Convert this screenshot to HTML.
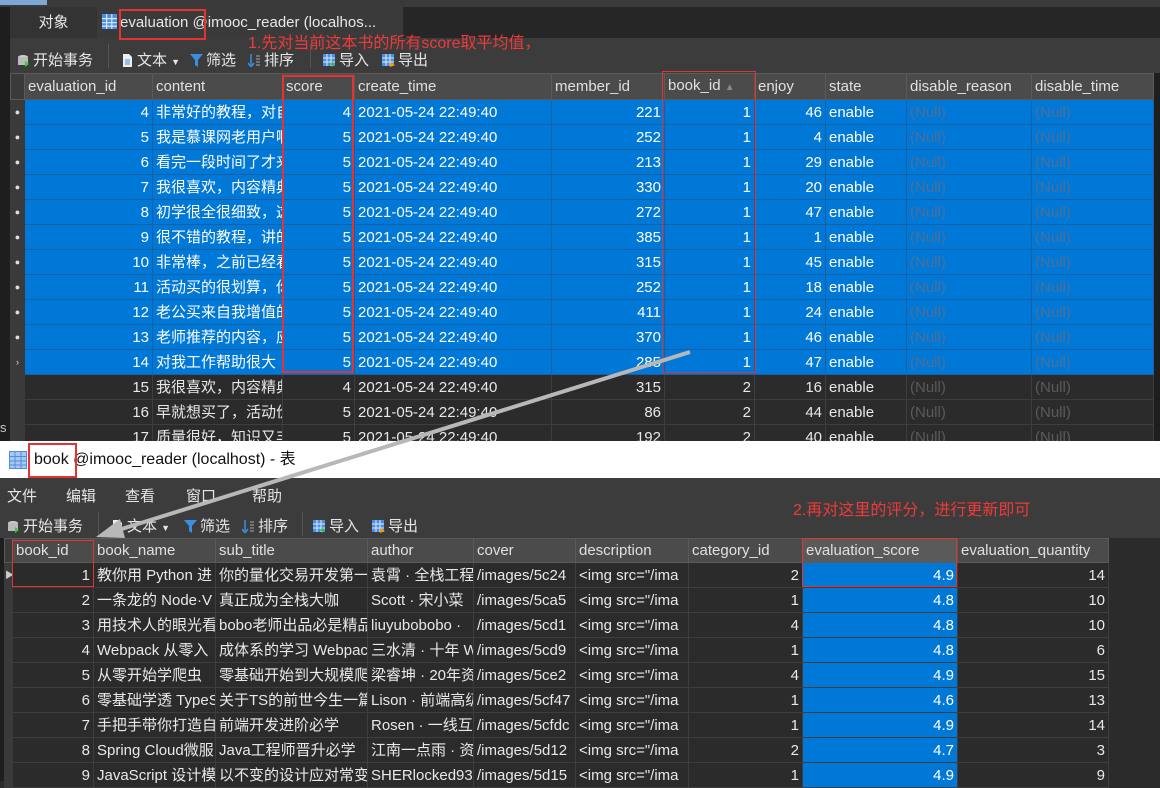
<!DOCTYPE html>
<html><head><meta charset="utf-8"><style>
*{margin:0;padding:0;box-sizing:border-box}
body{width:1160px;height:781px;overflow:hidden;background:#2b2b2b;position:relative;font-family:"Liberation Sans","Noto Sans CJK SC",sans-serif;font-size:15px;color:#e8e8e8}
.abs{position:absolute}
table{border-collapse:collapse;table-layout:fixed;position:absolute}
td,th{height:25px;border:1px solid #3e3e3e;white-space:nowrap;overflow:hidden;padding:0 3px;font-weight:normal;text-align:left;line-height:23px}
th{background:#4b4b4b;color:#e0e0e0;border-color:#5a5a5a;height:24px}
td.r{text-align:right}
tr.s td{background:#0078d7;border-color:#1a5fa0;color:#fff}
td.n{color:#5a5a5a}
tr.s td.n{color:#4f6f95}
td.m{background:#3a3a3a;border-color:#3a3a3a;color:#ccc;font-size:9px;padding:0;text-align:center}
tr.s td.m{background:#3a3a3a;border-color:#3a3a3a;color:#ddd}
.red{position:absolute;border:2px solid #e53333}
.tb{position:absolute;font-size:15px;color:#e6e6e6}
.ico{display:inline-block;width:13px;height:13px;vertical-align:-2px;margin-right:3px}
</style></head><body>
<div class="abs" style="left:0;top:0;width:1160px;height:7px;background:#3a3a3a"></div>
<div class="abs" style="left:0;top:0;width:47px;height:5px;background:#7fa7d6"></div>
<div class="abs" style="left:0;top:7px;width:1160px;height:31px;background:#262626"></div>
<div class="abs" style="left:0;top:7px;width:10px;height:434px;background:#1e1e1e"></div>
<div class="abs" style="left:10px;top:7px;width:87px;height:31px;background:#333;text-align:center;line-height:31px">对象</div>
<div class="abs" style="left:97px;top:7px;width:306px;height:31px;background:#3a3a3a;line-height:31px;padding-left:5px;white-space:nowrap"><svg class="ico" viewBox="0 0 13 13" style="width:15px;height:15px"><rect x="0" y="0" width="13" height="13" fill="#4a8fe0"/><path d="M0 4H13M0 7.5H13M0 10.5H13M4 0V13M8.5 0V13" stroke="#dbe8f8" stroke-width="1"/></svg>evaluation @imooc_reader (localhos...</div>
<div class="abs" style="left:10px;top:38px;width:1150px;height:35px;background:#3c3c3c"></div>
<div class="tb" style="left:17px;top:49px"><svg class="ico" viewBox="0 0 13 13"><ellipse cx="6" cy="3" rx="5" ry="2" fill="#ccc"/><rect x="1" y="3" width="10" height="8" fill="#bbb"/><path d="M8 7l4 3-4 3z" fill="#3c3"/></svg>开始事务</div>
<div class="abs" style="left:108px;top:44px;width:1px;height:24px;background:#555"></div>
<div class="tb" style="left:121px;top:49px"><svg class="ico" viewBox="0 0 13 13"><path d="M2 0h6l3 3v10H2z" fill="#eee"/><path d="M4 6h5M4 8h5M4 10h5" stroke="#4a8fe0"/></svg>文本 <span style="font-size:9px">▼</span></div>
<div class="tb" style="left:190px;top:49px"><svg class="ico" viewBox="0 0 13 13"><path d="M0 0h13L8 6v7L5 11V6z" fill="#3a8fe0"/></svg>筛选</div>
<div class="tb" style="left:248px;top:49px"><svg class="ico" viewBox="0 0 13 13"><path d="M3 0v11M0 9l3 4 3-4" stroke="#3a8fe0" fill="none" stroke-width="1.5"/><path d="M8 2h4M8 5h4M8 8h4M8 11h4" stroke="#aaa"/></svg>排序</div>
<div class="abs" style="left:310px;top:44px;width:1px;height:24px;background:#555"></div>
<div class="tb" style="left:323px;top:49px"><svg class="ico" viewBox="0 0 13 13"><rect width="12" height="12" fill="#4a8fe0"/><path d="M0 4h12M0 8h12M4 0v12M8 0v12" stroke="#dbe8f8"/><path d="M7 10l3-3v6z" fill="#3c3"/></svg>导入</div>
<div class="tb" style="left:382px;top:49px"><svg class="ico" viewBox="0 0 13 13"><rect width="12" height="12" fill="#4a8fe0"/><path d="M0 4h12M0 8h12M4 0v12M8 0v12" stroke="#dbe8f8"/><path d="M8 8l5 3-5 2z" fill="#f90"/></svg>导出</div>
<div class="abs" style="left:248px;top:29px;color:#ee3a3a;font-size:16px;white-space:nowrap">1.先对当前这本书的所有score取平均值，</div>
<div class="abs" style="left:10px;top:73px;width:1143px;height:368px;background:#2b2b2b"></div>
<div class="abs" style="left:1153px;top:73px;width:7px;height:368px;background:#1e1e1e"></div>
<table style="left:10px;top:73px;width:1143px">
<colgroup><col style="width:14px"><col style="width:128px"><col style="width:130px"><col style="width:72px"><col style="width:197px"><col style="width:113px"><col style="width:90px"><col style="width:71px"><col style="width:81px"><col style="width:125px"><col style="width:122px"></colgroup>
<tr><th class="m" style="background:#3a3a3a"></th><th>evaluation_id</th><th>content</th><th>score</th><th>create_time</th><th>member_id</th><th>book_id <span style="color:#888;font-size:10px">▲</span></th><th>enjoy</th><th>state</th><th>disable_reason</th><th>disable_time</th></tr>
<tr class="s"><td class="m">●</td><td class="r">4</td><td>非常好的教程，对自</td><td class="r">4</td><td>2021-05-24 22:49:40</td><td class="r">221</td><td class="r">1</td><td class="r">46</td><td>enable</td><td class="n">(Null)</td><td class="n">(Null)</td></tr>
<tr class="s"><td class="m">●</td><td class="r">5</td><td>我是慕课网老用户啊</td><td class="r">5</td><td>2021-05-24 22:49:40</td><td class="r">252</td><td class="r">1</td><td class="r">4</td><td>enable</td><td class="n">(Null)</td><td class="n">(Null)</td></tr>
<tr class="s"><td class="m">●</td><td class="r">6</td><td>看完一段时间了才来</td><td class="r">5</td><td>2021-05-24 22:49:40</td><td class="r">213</td><td class="r">1</td><td class="r">29</td><td>enable</td><td class="n">(Null)</td><td class="n">(Null)</td></tr>
<tr class="s"><td class="m">●</td><td class="r">7</td><td>我很喜欢，内容精典</td><td class="r">5</td><td>2021-05-24 22:49:40</td><td class="r">330</td><td class="r">1</td><td class="r">20</td><td>enable</td><td class="n">(Null)</td><td class="n">(Null)</td></tr>
<tr class="s"><td class="m">●</td><td class="r">8</td><td>初学很全很细致，这</td><td class="r">5</td><td>2021-05-24 22:49:40</td><td class="r">272</td><td class="r">1</td><td class="r">47</td><td>enable</td><td class="n">(Null)</td><td class="n">(Null)</td></tr>
<tr class="s"><td class="m">●</td><td class="r">9</td><td>很不错的教程，讲的</td><td class="r">5</td><td>2021-05-24 22:49:40</td><td class="r">385</td><td class="r">1</td><td class="r">1</td><td>enable</td><td class="n">(Null)</td><td class="n">(Null)</td></tr>
<tr class="s"><td class="m">●</td><td class="r">10</td><td>非常棒，之前已经看</td><td class="r">5</td><td>2021-05-24 22:49:40</td><td class="r">315</td><td class="r">1</td><td class="r">45</td><td>enable</td><td class="n">(Null)</td><td class="n">(Null)</td></tr>
<tr class="s"><td class="m">●</td><td class="r">11</td><td>活动买的很划算，你</td><td class="r">5</td><td>2021-05-24 22:49:40</td><td class="r">252</td><td class="r">1</td><td class="r">18</td><td>enable</td><td class="n">(Null)</td><td class="n">(Null)</td></tr>
<tr class="s"><td class="m">●</td><td class="r">12</td><td>老公买来自我增值的</td><td class="r">5</td><td>2021-05-24 22:49:40</td><td class="r">411</td><td class="r">1</td><td class="r">24</td><td>enable</td><td class="n">(Null)</td><td class="n">(Null)</td></tr>
<tr class="s"><td class="m">●</td><td class="r">13</td><td>老师推荐的内容，应</td><td class="r">5</td><td>2021-05-24 22:49:40</td><td class="r">370</td><td class="r">1</td><td class="r">46</td><td>enable</td><td class="n">(Null)</td><td class="n">(Null)</td></tr>
<tr class="s"><td class="m">›</td><td class="r">14</td><td>对我工作帮助很大</td><td class="r">5</td><td>2021-05-24 22:49:40</td><td class="r">285</td><td class="r">1</td><td class="r">47</td><td>enable</td><td class="n">(Null)</td><td class="n">(Null)</td></tr>
<tr><td class="m"></td><td class="r">15</td><td>我很喜欢，内容精典</td><td class="r">4</td><td>2021-05-24 22:49:40</td><td class="r">315</td><td class="r">2</td><td class="r">16</td><td>enable</td><td class="n">(Null)</td><td class="n">(Null)</td></tr>
<tr><td class="m"></td><td class="r">16</td><td>早就想买了，活动价</td><td class="r">5</td><td>2021-05-24 22:49:40</td><td class="r">86</td><td class="r">2</td><td class="r">44</td><td>enable</td><td class="n">(Null)</td><td class="n">(Null)</td></tr>
<tr><td class="m"></td><td class="r">17</td><td>质量很好，知识又丰</td><td class="r">5</td><td>2021-05-24 22:49:40</td><td class="r">192</td><td class="r">2</td><td class="r">40</td><td>enable</td><td class="n">(Null)</td><td class="n">(Null)</td></tr>
</table>
<div class="abs" style="left:0;top:420px;width:10px;color:#ccc;font-size:13px">s</div>
<div class="red" style="left:119px;top:9px;width:87px;height:31px"></div>
<div class="red" style="left:282px;top:75px;width:72px;height:298px"></div>
<div class="red" style="left:662px;top:71px;width:94px;height:302px;border-width:1.5px"></div>

<div class="abs" style="left:0;top:441px;width:1160px;height:340px;background:#2b2b2b"></div>
<div class="abs" style="left:0;top:441px;width:1160px;height:37px;background:#fff;color:#111;font-size:16px;line-height:37px;padding-left:34px;white-space:nowrap">book @imooc_reader (localhost) - 表</div>
<svg class="abs" style="left:9px;top:451px" width="18" height="18" viewBox="0 0 18 18"><rect x="0.5" y="0.5" width="17" height="17" fill="#a9c8ef" stroke="#4a8fe0"/><path d="M0 5.5H18M0 10H18M0 14H18M6 0V18M12 0V18" stroke="#4a8fe0"/></svg>
<div class="red" style="left:28px;top:443px;width:49px;height:35px"></div>
<div class="abs" style="left:0;top:478px;width:1160px;height:60px;background:#3c3c3c"></div>
<div class="tb" style="left:7px;top:485px">文件</div>
<div class="tb" style="left:66px;top:485px">编辑</div>
<div class="tb" style="left:125px;top:485px">查看</div>
<div class="tb" style="left:186px;top:485px">窗口</div>
<div class="tb" style="left:252px;top:485px">帮助</div>
<div class="tb" style="left:7px;top:515px"><svg class="ico" viewBox="0 0 13 13"><ellipse cx="6" cy="3" rx="5" ry="2" fill="#ccc"/><rect x="1" y="3" width="10" height="8" fill="#bbb"/><path d="M8 7l4 3-4 3z" fill="#3c3"/></svg>开始事务</div>
<div class="abs" style="left:98px;top:512px;width:1px;height:24px;background:#555"></div>
<div class="tb" style="left:111px;top:515px"><svg class="ico" viewBox="0 0 13 13"><path d="M2 0h6l3 3v10H2z" fill="#eee"/><path d="M4 6h5M4 8h5M4 10h5" stroke="#4a8fe0"/></svg>文本 <span style="font-size:9px">▼</span></div>
<div class="tb" style="left:184px;top:515px"><svg class="ico" viewBox="0 0 13 13"><path d="M0 0h13L8 6v7L5 11V6z" fill="#3a8fe0"/></svg>筛选</div>
<div class="tb" style="left:242px;top:515px"><svg class="ico" viewBox="0 0 13 13"><path d="M3 0v11M0 9l3 4 3-4" stroke="#3a8fe0" fill="none" stroke-width="1.5"/><path d="M8 2h4M8 5h4M8 8h4M8 11h4" stroke="#aaa"/></svg>排序</div>
<div class="abs" style="left:302px;top:512px;width:1px;height:24px;background:#555"></div>
<div class="tb" style="left:313px;top:515px"><svg class="ico" viewBox="0 0 13 13"><rect width="12" height="12" fill="#4a8fe0"/><path d="M0 4h12M0 8h12M4 0v12M8 0v12" stroke="#dbe8f8"/><path d="M7 10l3-3v6z" fill="#3c3"/></svg>导入</div>
<div class="tb" style="left:372px;top:515px"><svg class="ico" viewBox="0 0 13 13"><rect width="12" height="12" fill="#4a8fe0"/><path d="M0 4h12M0 8h12M4 0v12M8 0v12" stroke="#dbe8f8"/><path d="M8 8l5 3-5 2z" fill="#f90"/></svg>导出</div>
<div class="abs" style="left:793px;top:496px;color:#ee3a3a;font-size:16px;white-space:nowrap">2.再对这里的评分，进行更新即可</div>
<div class="abs" style="left:0;top:538px;width:4px;height:243px;background:#1e1e1e"></div>
<table style="left:4px;top:538px;width:1104px">
<colgroup><col style="width:8px"><col style="width:81px"><col style="width:122px"><col style="width:152px"><col style="width:106px"><col style="width:102px"><col style="width:113px"><col style="width:114px"><col style="width:155px"><col style="width:151px"></colgroup>
<tr><th class="m" style="background:#3a3a3a"></th><th>book_id</th><th>book_name</th><th>sub_title</th><th>author</th><th>cover</th><th>description</th><th>category_id</th><th style="background:#5a5a5a">evaluation_score</th><th>evaluation_quantity</th></tr>
<tr><td class="m">▶</td><td class="r">1</td><td>教你用 Python 进</td><td>你的量化交易开发第一</td><td>袁霄 · 全栈工程</td><td>/images/5c24</td><td>&lt;img src="/ima</td><td class="r">2</td><td class="r" style="background:#0078d7;color:#fff">4.9</td><td class="r">14</td></tr>
<tr><td class="m"></td><td class="r">2</td><td>一条龙的 Node·V</td><td>真正成为全栈大咖</td><td>Scott · 宋小菜</td><td>/images/5ca5</td><td>&lt;img src="/ima</td><td class="r">1</td><td class="r" style="background:#0078d7;color:#fff">4.8</td><td class="r">10</td></tr>
<tr><td class="m"></td><td class="r">3</td><td>用技术人的眼光看</td><td>bobo老师出品必是精品</td><td>liuyubobobo ·</td><td>/images/5cd1</td><td>&lt;img src="/ima</td><td class="r">4</td><td class="r" style="background:#0078d7;color:#fff">4.8</td><td class="r">10</td></tr>
<tr><td class="m"></td><td class="r">4</td><td>Webpack 从零入</td><td>成体系的学习 Webpack</td><td>三水清 · 十年 W</td><td>/images/5cd9</td><td>&lt;img src="/ima</td><td class="r">1</td><td class="r" style="background:#0078d7;color:#fff">4.8</td><td class="r">6</td></tr>
<tr><td class="m"></td><td class="r">5</td><td>从零开始学爬虫</td><td>零基础开始到大规模爬</td><td>梁睿坤 · 20年资</td><td>/images/5ce2</td><td>&lt;img src="/ima</td><td class="r">4</td><td class="r" style="background:#0078d7;color:#fff">4.9</td><td class="r">15</td></tr>
<tr><td class="m"></td><td class="r">6</td><td>零基础学透 TypeS</td><td>关于TS的前世今生一篇</td><td>Lison · 前端高级</td><td>/images/5cf47</td><td>&lt;img src="/ima</td><td class="r">1</td><td class="r" style="background:#0078d7;color:#fff">4.6</td><td class="r">13</td></tr>
<tr><td class="m"></td><td class="r">7</td><td>手把手带你打造自</td><td>前端开发进阶必学</td><td>Rosen · 一线互</td><td>/images/5cfdc</td><td>&lt;img src="/ima</td><td class="r">1</td><td class="r" style="background:#0078d7;color:#fff">4.9</td><td class="r">14</td></tr>
<tr><td class="m"></td><td class="r">8</td><td>Spring Cloud微服</td><td>Java工程师晋升必学</td><td>江南一点雨 · 资</td><td>/images/5d12</td><td>&lt;img src="/ima</td><td class="r">2</td><td class="r" style="background:#0078d7;color:#fff">4.7</td><td class="r">3</td></tr>
<tr><td class="m"></td><td class="r">9</td><td>JavaScript 设计模</td><td>以不变的设计应对常变</td><td>SHERlocked93</td><td>/images/5d15</td><td>&lt;img src="/ima</td><td class="r">1</td><td class="r" style="background:#0078d7;color:#fff">4.9</td><td class="r">9</td></tr>
</table>
<div class="red" style="left:12px;top:540px;width:82px;height:47px;border-width:1.5px"></div>
<div class="red" style="left:802px;top:538px;width:155px;height:49px;border-width:1.5px"></div>
<svg class="abs" style="left:0;top:0" width="1160" height="781"><line x1="690" y1="352" x2="112" y2="532" stroke="#b8b8b8" stroke-width="4"/><path d="M96 537 L120 519 L125 538 Z" fill="#b8b8b8"/></svg>
</body></html>
